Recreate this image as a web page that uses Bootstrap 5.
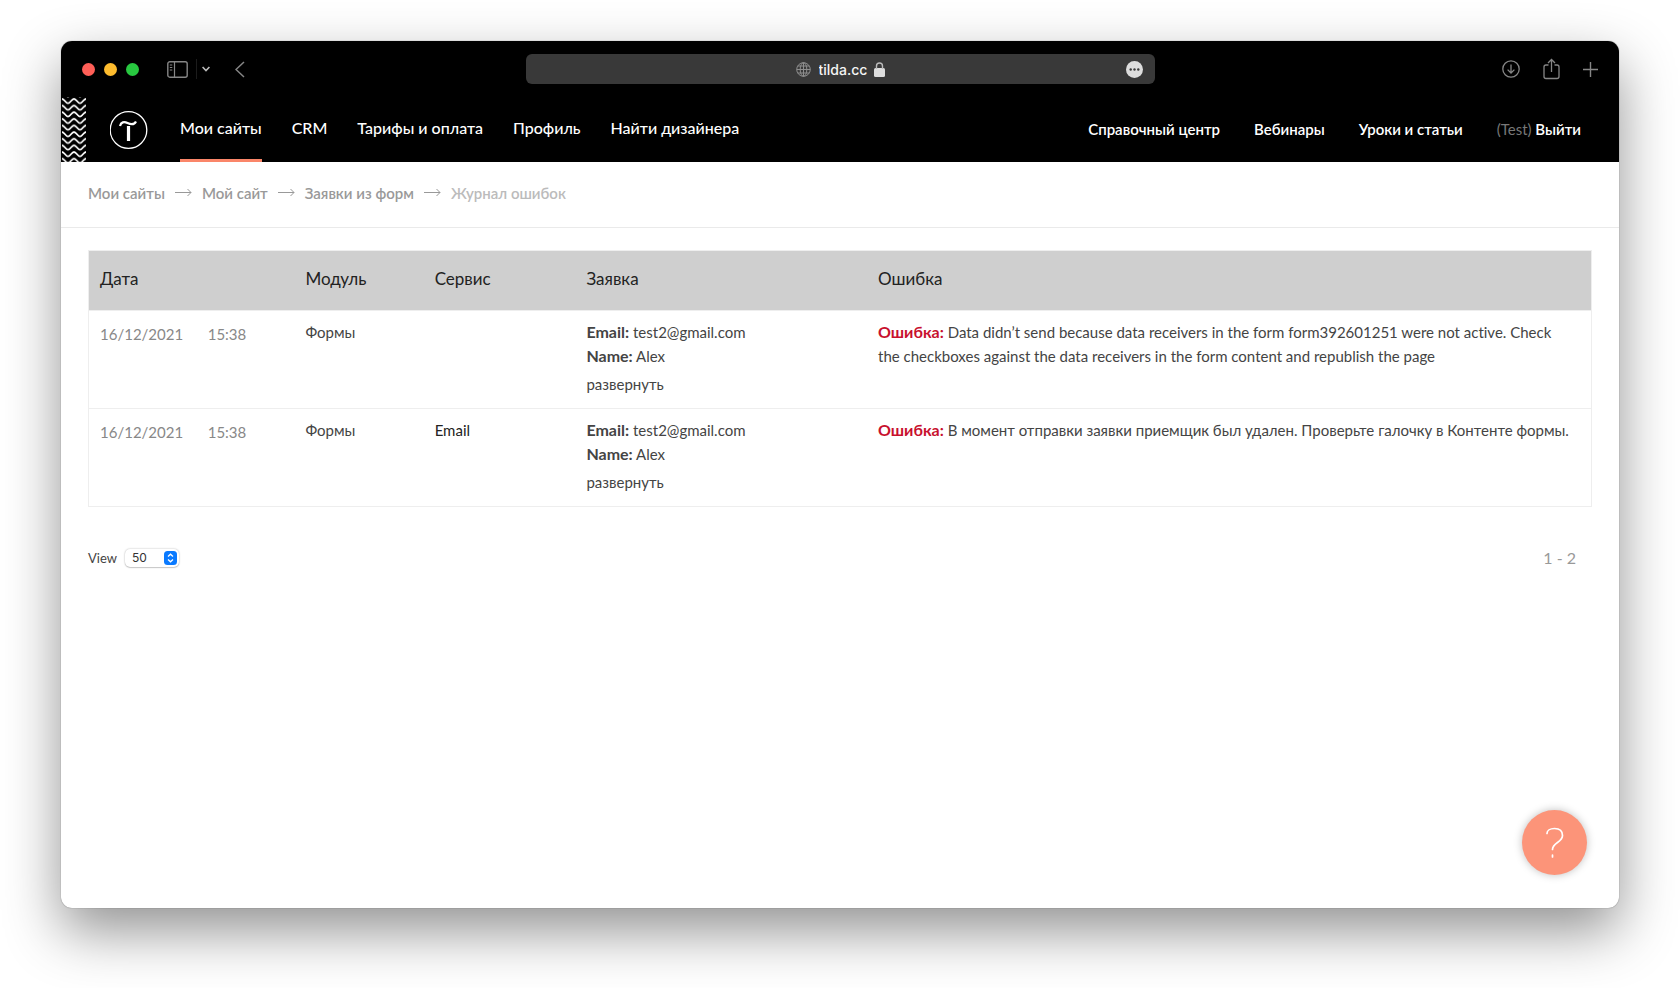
<!DOCTYPE html>
<html lang="ru">
<head>
<meta charset="utf-8">
<meta name="viewport" content="width=device-width, initial-scale=1">
<title>Журнал ошибок</title>
<link href="https://cdn.jsdelivr.net/npm/bootstrap@5.3.0/dist/css/bootstrap.min.css" rel="stylesheet">
<style>
body{background:#fff;color:#444;font-family:Lato,"Liberation Sans",sans-serif;font-size:15px;line-height:24px;padding:41px 61px 80px;font-variant-ligatures:none}
a{color:inherit;text-decoration:none}
.window{min-height:calc(100vh - 121px);border-radius:11px;background:#fff;box-shadow:0 0 1px rgba(0,0,0,.6),0 23px 56px rgba(0,0,0,.43)}
.titlebar,.sitebar{background:#000}
.titlebar{height:56px;padding:0 21px;border-radius:11px 11px 0 0;display:grid;grid-template-columns:1fr 629px 1fr;align-items:center;color:#868686}
.titlebar svg,.topnav svg{display:block}
.plain{background:none;border:0;padding:0;color:inherit}
.dots{gap:9px}
.dot{width:13px;height:13px;border-radius:50%}
.red{background:#ff5f57}.yellow{background:#febc2e}.green{background:#28c840}
.tools{gap:23px}
.address{height:30px;border-radius:6px;background:#393939}
.address input{width:51px;padding:1px 0 0;border:0;background:none;color:#f4f4f4;font:500 14px/20px Inter,sans-serif;outline:0}
.split{width:1px;height:20px;background:#1c1c1c}
.topnav{height:65px;color:#fff;font-size:16px;font-weight:500;overflow:hidden}
.topnav a.item{display:block;line-height:62px;height:65px;white-space:nowrap}
.topnav .main-links{gap:30px}
.topnav .side{gap:34px;padding-right:38px}
.topnav .side a.item{line-height:64px;font-size:15px;font-weight:600}
.topnav .current{border-bottom:3px solid #fa8669}
.topnav .user{color:#777;font-weight:400}
.crumbs{height:66px;gap:10px;padding:0 27px 4px;border-bottom:1px solid #eaeaea;color:#999;font-weight:600}
.crumbs .here{color:#bbb}
.log-area{padding:22px 27px 0}
.log{table-layout:fixed;width:100%;border:1px solid #eee}
.log th,.log td{vertical-align:top;padding:9px 11px 12px}
.log th{background:#cfcfcf;color:#222;font-size:17px;font-weight:400;padding:16px 11px 19px}
.log tr{border-bottom:1px solid #eee}
.log .stamp{color:#888;padding-top:11px;white-space:nowrap}
.log td:last-child{padding-right:21px}
.log strong{font-size:16px;font-weight:700;line-height:20px}
.log .err{color:#c8102e}
.log .service{color:#222}
.pager{padding:39px 43px 0 27px}
.view{font-size:13px}
.count-select{appearance:none;width:54px;height:18px;padding:0 0 0 7px;border:0;border-radius:5px;background:#fff;box-shadow:0 0 2px rgba(0,0,0,.3),0 1px 1px rgba(0,0,0,.15);color:#333;font:12px/18px Inter,sans-serif}
.stepper{position:absolute;right:2px;top:2px;pointer-events:none}
.range{color:#999;font-size:16px}
.help{position:absolute;right:32px;bottom:33px;width:65px;height:65px;border:0;padding:0;border-radius:50%;background:#fc9479;box-shadow:0 0 8px rgba(0,0,0,.25)}
</style>
</head>
<body>
<div class="window position-relative">
  <header>
    <div class="titlebar">
      <div class="d-flex align-items-center">
        <div class="dots d-flex me-4 pe-1">
          <span class="dot red"></span><span class="dot yellow"></span><span class="dot green"></span>
        </div>
        <button class="plain" aria-label="Боковая панель"><svg width="21" height="17" fill="none" stroke="currentColor" stroke-width="1.4"><rect x=".8" y=".8" width="19.4" height="15.4" rx="2"/><path d="M7.500 1v15M2.800 4h2.500M2.800 6.500h2.500M2.800 9h2.500" stroke-width="1.200"/></svg></button>
        <span class="split ms-2 me-1"></span>
        <button class="plain" aria-label="Меню"><svg width="10" height="6" fill="none" stroke="#bbb" stroke-width="1.600"><path d="M1.600 1 5 4.500 8.400 1"/></svg></button>
        <button class="plain ms-4" aria-label="Назад"><svg width="10" height="17" fill="none" stroke="currentColor" stroke-width="1.500"><path d="M9 1 1 8.500l8 7.500"/></svg></button>
      </div>
      <div class="address d-flex align-items-center position-relative justify-content-center">
        <svg width="15" height="15" fill="none" stroke="#8e8e8e" stroke-width="1"><circle cx="7.500" cy="7.500" r="6.800"/><ellipse cx="7.500" cy="7.500" rx="3.300" ry="6.800"/><path d="M7.500.7v13.600M.7 7.500h13.600M1.800 4h11.400M1.800 11h11.400"/></svg>
        <input class="ms-2" type="text" value="tilda.cc" aria-label="Адрес">
        <svg class="ms-1" width="11" height="15"><rect y="6" width="11" height="9" rx="1.500" fill="#ddd"/><path d="M2.500 7V4a3 3 0 0 1 6 0v3" fill="none" stroke="#bbb" stroke-width="1.400"/></svg>
        <button class="plain position-absolute end-0 me-2 pe-1" aria-label="Ещё"><svg width="17" height="17"><circle cx="8.500" cy="8.500" r="8.500" fill="#ddd"/><g fill="#393939"><circle cx="4.700" cy="8.500" r="1.200"/><circle cx="8.500" cy="8.500" r="1.200"/><circle cx="12.300" cy="8.500" r="1.200"/></g></svg></button>
      </div>
      <div class="tools d-flex justify-content-end align-items-center">
        <button class="plain" aria-label="Загрузки"><svg width="18" height="18" fill="none" stroke="currentColor" stroke-width="1.300"><circle cx="9" cy="9" r="8.200"/><path d="M9 4.500v8.500M5.600 9.600 9 13l3.400-3.400"/></svg></button>
        <button class="plain" aria-label="Поделиться"><svg width="17" height="22" fill="none" stroke="currentColor" stroke-width="1.300"><path d="M5.500 7H3a2 2 0 0 0-2 2v9.500a2 2 0 0 0 2 2h11a2 2 0 0 0 2-2V9a2 2 0 0 0-2-2h-2.500M8.500 14V2M5 5l3.500-3.500L12 5"/></svg></button>
        <button class="plain" aria-label="Новая вкладка"><svg width="15" height="15" stroke="currentColor" stroke-width="1.400"><path d="M7.500 0v15M0 7.500h15"/></svg></button>
      </div>
    </div>
    <nav class="topnav sitebar d-flex align-items-center">
      <svg class="flex-shrink-0" width="25" height="65"><defs><pattern id="waves" width="12" height="6.640" patternUnits="userSpaceOnUse" x="1" y="0"><path d="M-6-3.700C-3.500-3.700-2.500.6 0 .6S3.500-3.700 6-3.700 9.500.6 12 .6M-6 2.900C-3.500 2.900-2.500 7.200 0 7.200S3.500 2.900 6 2.900 9.500 7.200 12 7.200 15.500 2.900 18 2.900" transform="translate(6 -1)" fill="none" stroke="#fff" stroke-width="1.700"/></pattern></defs><rect x="1" width="24" height="65" fill="url(#waves)"/></svg>
      <a class="ms-4 me-4 flex-shrink-0" href="#" aria-label="Tilda"><svg width="38" height="38" fill="none" stroke="#fff"><circle cx="18.500" cy="19" r="18.300" stroke-width="1.300"/><path d="M10 15c1-4 4-4.700 7.500-3s7 1.500 8.500-1.500" stroke-width="2.200"/><path d="M18.500 15v15" stroke-width="3.200"/></svg></a>
      <div class="main-links d-flex ms-2">
        <a class="item current" href="#">Мои сайты</a><a class="item" href="#">CRM</a><a class="item" href="#">Тарифы и оплата</a><a class="item" href="#">Профиль</a><a class="item" href="#">Найти дизайнера</a>
      </div>
      <div class="side d-flex ms-auto">
        <a class="item" href="#">Справочный центр</a><a class="item" href="#">Вебинары</a><a class="item" href="#">Уроки и статьи</a><a class="item" href="#"><span class="user">(Test)</span> Выйти</a>
      </div>
    </nav>
  </header>
  <nav class="crumbs d-flex align-items-center" aria-label="Путь">
    <a href="#">Мои сайты</a>
    <svg width="17" height="9" fill="none" stroke="#999"><path d="M0 4.500h16M12.500 1 16 4.500 12.500 8"/></svg>
    <a href="#">Мой сайт</a>
    <svg width="17" height="9" fill="none" stroke="#999"><path d="M0 4.500h16M12.500 1 16 4.500 12.500 8"/></svg>
    <a href="#">Заявки из форм</a>
    <svg width="17" height="9" fill="none" stroke="#999"><path d="M0 4.500h16M12.500 1 16 4.500 12.500 8"/></svg>
    <span class="here">Журнал ошибок</span>
  </nav>
  <main>
    <div class="log-area">
      <table class="log">
        <colgroup><col style="width:7.2%"><col style="width:6.5%"><col style="width:8.6%"><col style="width:10.1%"><col style="width:19.4%"><col></colgroup>
        <thead><tr><th colspan="2">Дата</th><th>Модуль</th><th>Сервис</th><th>Заявка</th><th>Ошибка</th></tr></thead>
        <tbody>
          <tr>
            <td class="stamp">16/12/2021</td><td class="stamp">15:38</td><td>Формы</td><td></td>
            <td><div><strong>Email:</strong> test2@gmail.com</div><div><strong>Name:</strong> Alex</div><a class="d-block mt-1" href="#">развернуть</a></td>
            <td><strong class="err">Ошибка:</strong> Data didn’t send because data receivers in the form form392601251 were not active. Check the checkboxes against the data receivers in the form content and republish the page</td>
          </tr>
          <tr>
            <td class="stamp">16/12/2021</td><td class="stamp">15:38</td><td>Формы</td><td class="service">Email</td>
            <td><div><strong>Email:</strong> test2@gmail.com</div><div><strong>Name:</strong> Alex</div><a class="d-block mt-1" href="#">развернуть</a></td>
            <td><strong class="err">Ошибка:</strong> В момент отправки заявки приемщик был удален. Проверьте галочку в Контенте формы.</td>
          </tr>
        </tbody>
      </table>
    </div>
    <div class="pager d-flex justify-content-between align-items-center">
      <div class="view d-flex align-items-center gap-2">
        <label for="count">View</label>
        <div class="position-relative d-flex">
          <select class="count-select" id="count"><option>50</option><option>100</option></select>
          <svg class="stepper" width="13" height="14"><rect width="13" height="14" rx="3.500" fill="#0a7aff"/><path d="M4 5.500 6.500 3.200 9 5.500M4 8.500l2.500 2.300L9 8.500" fill="none" stroke="#fff" stroke-width="1.300"/></svg>
        </div>
      </div>
      <span class="range">1 - 2</span>
    </div>
  </main>
  <button class="help" aria-label="Помощь"><svg width="65" height="65" fill="none" stroke="#fff" stroke-width="1.700" stroke-linecap="round"><path d="M25 23.500c0-3 3-5 7.500-5 5 0 8 2.500 8 7 0 7-10 7-10 14M30.500 45v2"/></svg></button>
</div>
<script src="https://cdn.jsdelivr.net/npm/bootstrap@5.3.0/dist/js/bootstrap.bundle.min.js"></script>
</body>
</html>
